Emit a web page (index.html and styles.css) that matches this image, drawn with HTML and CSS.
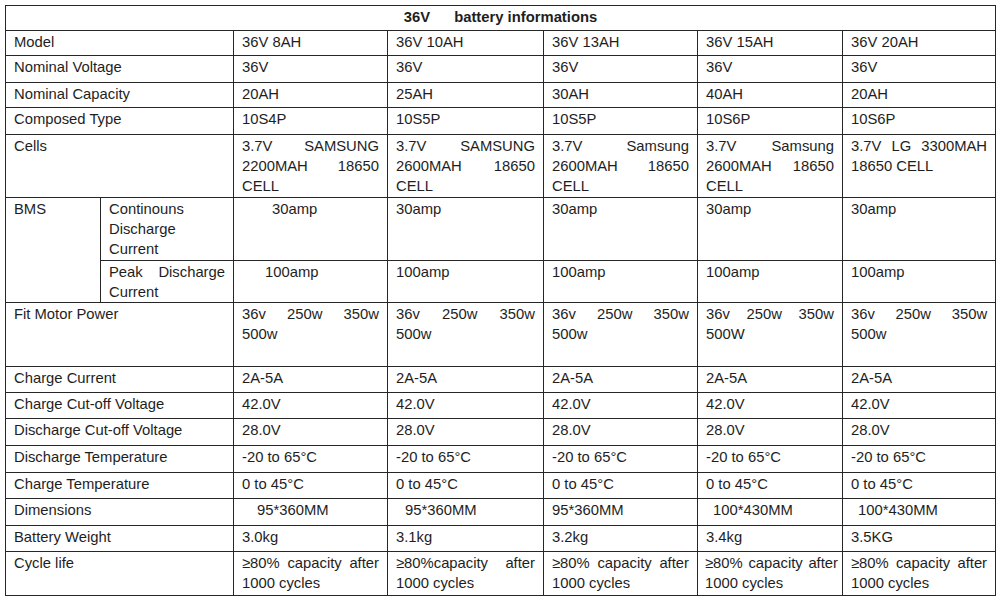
FILE: index.html
```html
<!DOCTYPE html>
<html>
<head>
<meta charset="utf-8">
<link rel="stylesheet" href="styles.css">
</head>
<body>
<table class="spec">
  <colgroup>
    <col class="c-label">
    <col class="c-sub">
    <col class="c-2">
    <col class="c-3">
    <col class="c-4">
    <col class="c-5">
    <col class="c-6">
  </colgroup>
  <tr class="r-title"><th colspan="7"><span class="t-volt">36V</span>battery informations</th></tr>
  <tr class="r-25"><td colspan="2">Model</td><td>36V 8AH</td><td>36V 10AH</td><td>36V 13AH</td><td>36V 15AH</td><td>36V 20AH</td></tr>
  <tr class="r-27"><td colspan="2">Nominal Voltage</td><td>36V</td><td>36V</td><td>36V</td><td>36V</td><td>36V</td></tr>
  <tr class="r-25"><td colspan="2">Nominal Capacity</td><td>20AH</td><td>25AH</td><td>30AH</td><td>40AH</td><td>20AH</td></tr>
  <tr class="r-27"><td colspan="2">Composed Type</td><td>10S4P</td><td>10S5P</td><td>10S5P</td><td>10S6P</td><td>10S6P</td></tr>
  <tr class="r-63"><td colspan="2">Cells</td><td>3.7V SAMSUNG 2200MAH 18650 CELL</td><td>3.7V SAMSUNG 2600MAH 18650 CELL</td><td>3.7V Samsung 2600MAH 18650 CELL</td><td>3.7V Samsung 2600MAH 18650 CELL</td><td>3.7V LG 3300MAH 18650 CELL</td></tr>
  <tr class="r-63"><td rowspan="2">BMS</td><td>Continouns Discharge Current</td><td class="ind-30">30amp</td><td>30amp</td><td>30amp</td><td>30amp</td><td>30amp</td></tr>
  <tr class="r-41"><td>Peak Discharge Current</td><td class="ind-23">100amp</td><td>100amp</td><td>100amp</td><td>100amp</td><td>100amp</td></tr>
  <tr class="r-64"><td colspan="2">Fit Motor Power</td><td>36v 250w 350w 500w</td><td>36v 250w 350w 500w</td><td>36v 250w 350w 500w</td><td>36v 250w 350w 500W</td><td>36v 250w 350w 500w</td></tr>
  <tr class="r-26"><td colspan="2">Charge Current</td><td>2A-5A</td><td>2A-5A</td><td>2A-5A</td><td>2A-5A</td><td>2A-5A</td></tr>
  <tr class="r-26"><td colspan="2">Charge Cut-off Voltage</td><td>42.0V</td><td>42.0V</td><td>42.0V</td><td>42.0V</td><td>42.0V</td></tr>
  <tr class="r-27"><td colspan="2">Discharge Cut-off Voltage</td><td>28.0V</td><td>28.0V</td><td>28.0V</td><td>28.0V</td><td>28.0V</td></tr>
  <tr class="r-27"><td colspan="2">Discharge Temperature</td><td>-20 to 65°C</td><td>-20 to 65°C</td><td>-20 to 65°C</td><td>-20 to 65°C</td><td>-20 to 65°C</td></tr>
  <tr class="r-26"><td colspan="2">Charge Temperature</td><td>0 to 45°C</td><td>0 to 45°C</td><td>0 to 45°C</td><td>0 to 45°C</td><td>0 to 45°C</td></tr>
  <tr class="r-27"><td colspan="2">Dimensions</td><td class="ind-15">95*360MM</td><td class="ind-9">95*360MM</td><td>95*360MM</td><td class="ind-7">100*430MM</td><td class="ind-7">100*430MM</td></tr>
  <tr class="r-26"><td colspan="2">Battery Weight</td><td>3.0kg</td><td>3.1kg</td><td>3.2kg</td><td>3.4kg</td><td>3.5KG</td></tr>
  <tr class="r-44"><td colspan="2">Cycle life</td><td>≥80% capacity after 1000 cycles</td><td>≥80%capacity after 1000 cycles</td><td>≥80% capacity after 1000 cycles</td><td class="tight">≥80% capacity after 1000 cycles</td><td>≥80% capacity after 1000 cycles</td></tr>
</table>
</body>
</html>
```

FILE: styles.css
```css
html, body {
  margin: 0;
  padding: 0;
  background: #ffffff;
}

body {
  font-family: "Liberation Sans", Arial, sans-serif;
  color: #1e1e1e;
}

.spec {
  margin: 5px 0 0 5px;
  width: 990px;
  table-layout: fixed;
  border-collapse: collapse;
  font-size: 14.8px;
  line-height: 20px;
}

.c-label { width: 95px; }
.c-sub { width: 133px; }
.c-2 { width: 154px; }
.c-3 { width: 156px; }
.c-4 { width: 154px; }
.c-5 { width: 145px; }
.c-6 { width: 153px; }

.spec th,
.spec td {
  border: 1px solid #262626;
  padding: 1px 8px 0 8px;
  vertical-align: top;
  text-align: justify;
  font-weight: normal;
}

.spec th {
  text-align: center;
  font-weight: bold;
}

.t-volt {
  margin-right: 24px;
}

.r-title { height: 25px; }
.r-25 { height: 25px; }
.r-26 { height: 26px; }
.r-27 { height: 27px; }
.r-41 { height: 41px; }
.r-44 { height: 44px; }
.r-63 { height: 63px; }
.r-64 { height: 64px; }

.spec td.ind-30 { padding-left: 38px; }
.spec td.ind-23 { padding-left: 31px; }
.spec td.ind-15 { padding-left: 23px; }
.spec td.ind-9 { padding-left: 17px; }
.spec td.ind-7 { padding-left: 15px; }

.spec td.tight {
  padding-right: 4px;
  padding-left: 7px;
}
```
